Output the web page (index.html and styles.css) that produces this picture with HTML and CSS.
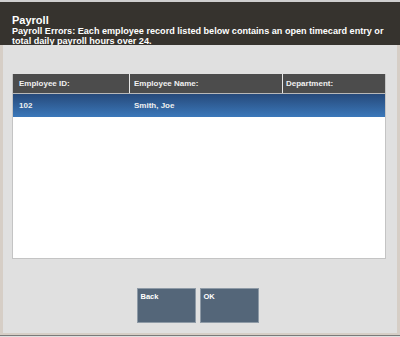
FILE: index.html
```
<!DOCTYPE html>
<html>
<head>
<meta charset="utf-8">
<link rel="stylesheet" href="styles.css">
</head>
<body>
<div class="screen">
  <div class="topline"></div>
  <header class="header">
    <div class="title">Payroll</div>
    <div class="subtitle">Payroll Errors: Each employee record listed below contains an open timecard entry or total daily payroll hours over 24.</div>
  </header>
  <main class="main">
    <div class="table">
      <div class="thead">
        <div class="th c1">Employee ID:</div>
        <div class="th c2">Employee Name:</div>
        <div class="th c3">Department:</div>
      </div>
      <div class="row selected">
        <div class="td c1">102</div>
        <div class="td c2">Smith, Joe</div>
        <div class="td c3"></div>
      </div>
    </div>
    <div class="buttons">
      <button class="btn">Back</button>
      <button class="btn">OK</button>
    </div>
  </main>
  <div class="bottom"></div>
</div>
</body>
</html>
```
FILE: styles.css
```
html, body {
  margin: 0;
  padding: 0;
}
body {
  width: 400px;
  height: 337px;
  overflow: hidden;
  font-family: "Liberation Sans", Arial, sans-serif;
  background: #e0e0e0;
}
.screen {
  height: 337px;
  display: flex;
  flex-direction: column;
}
.topline {
  height: 2px;
  background: #cfcfcf;
}
.header {
  height: 43px;
  box-sizing: border-box;
  background: #36332e;
  color: #ffffff;
  padding: 12px 10px 0 12px;
  font-weight: bold;
}
.title {
  font-size: 11px;
  line-height: 12px;
}
.subtitle {
  font-size: 9.1px;
  line-height: 10px;
}
.main {
  flex: 1;
  display: flex;
  flex-direction: column;
  background: #e0e0e0;
  border-left: 3px solid #d6cec6;
  border-right: 3px solid #d6cec6;
  padding: 29px 11px 0 9px;
}
.table {
  height: 185px;
  box-sizing: border-box;
  background: #ffffff;
  border: 1px solid #c4c4c4;
  border-top: none;
}
.thead {
  display: flex;
  height: 20px;
  background: #4c4c4c;
  border-bottom: 1px solid #b8b8b8;
  box-sizing: border-box;
}
.th, .td {
  font-size: 8px;
  font-weight: bold;
  color: #f0f0f0;
  padding-left: 6px;
  box-sizing: border-box;
  display: flex;
  align-items: center;
}
.c1 { width: 117px; }
.c2 { width: 153px; }
.c3 { flex: 1; }
.th.c1, .th.c2 {
  border-right: 1px solid #e8e8e8;
}
.td.c2 { padding-left: 4px; }
.th.c2 { padding-left: 4px; }
.th.c3 { padding-left: 3px; }
.row {
  display: flex;
  height: 23px;
}
.row.selected {
  background: linear-gradient(to bottom, #26497a, #3b78ba);
}
.buttons {
  display: flex;
  justify-content: center;
  gap: 4px;
  margin-top: 29px;
  padding-right: 3px;
}
.btn {
  width: 59px;
  height: 35px;
  margin: 0;
  padding: 3px 3px;
  background: #546679;
  border: 1px solid #8e9aa6;
  color: #ffffff;
  font-family: "Liberation Sans", Arial, sans-serif;
  font-size: 7.5px;
  font-weight: bold;
  text-align: left;
  display: flex;
  align-items: flex-start;
}
.bottom {
  height: 4px;
  border-top: 2px solid #d6cec6;
  background: #7a7a7a;
  box-sizing: border-box;
  border-bottom: 1px solid #e0e0e0;
}
```
